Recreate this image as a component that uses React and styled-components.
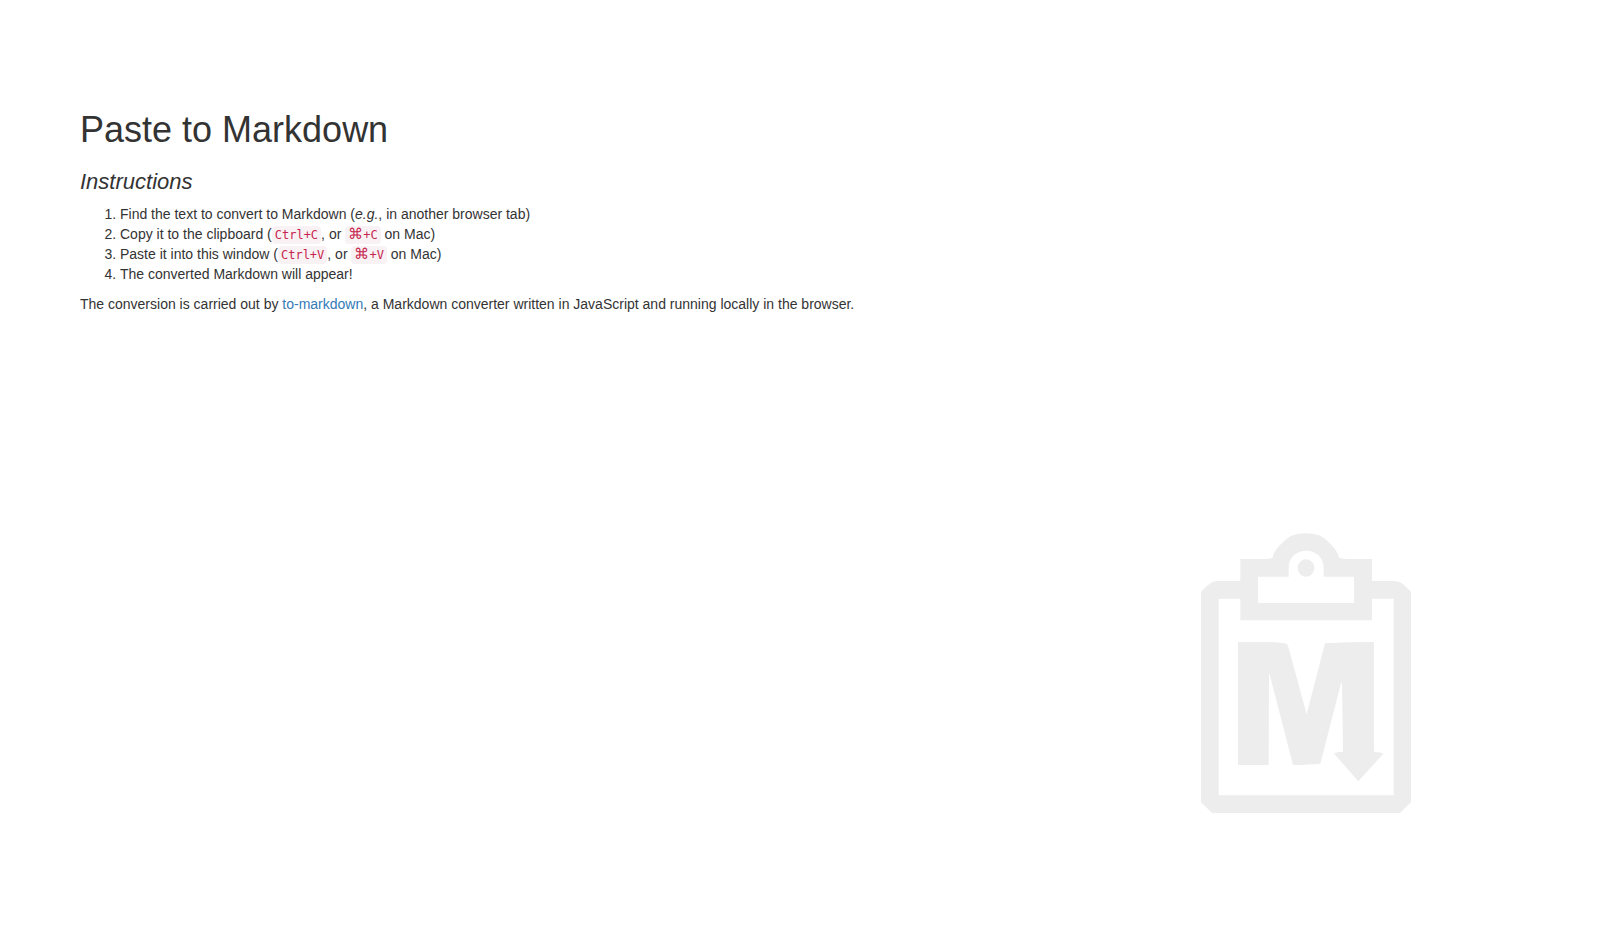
import React from "react";
import styled, { createGlobalStyle } from "styled-components";

const GlobalStyle = createGlobalStyle`
  *, *::before, *::after { box-sizing: border-box; }
  body {
    margin: 0;
    background: #fff;
    color: #333;
    font: 14px/20px "Liberation Sans", Arial, sans-serif;
  }
`;

const Page = styled.main`
  display: flex;
  flex-direction: column;
  min-height: 100vh;
  padding: 110px 80px 135px;
`;

const Title = styled.h1`
  margin: 0 0 20px;
  font-size: 36px;
  font-weight: 500;
  line-height: 40px;
`;

const Subtitle = styled.h2`
  margin: 0 0 10px;
  font-size: 22px;
  font-style: italic;
  font-weight: 500;
  line-height: 24px;
`;

const Steps = styled.ol`
  margin: 0 0 10px;
  padding-left: 40px;
`;

const Text = styled.p`
  margin: 0;
`;

const Code = styled.code`
  padding: 2px 3px;
  border-radius: 4px;
  background: #f9f2f4;
  color: #c7254e;
  font: 12px/16px "DejaVu Sans Mono", monospace;
`;

const Command = styled.span`
  font: 200 15px/12px "DejaVu Sans Light", "DejaVu Sans", sans-serif;
`;

const Link = styled.a`
  color: #337ab7;
  text-decoration: none;

  &:hover { text-decoration: underline; }
`;

const Clipboard = styled.svg`
  align-self: flex-end;
  flex: none;
  width: 210px;
  height: 280px;
  margin: auto 119px 0 0;
  fill: #ededed;
`;

function App() {
  return (
    <>
      <GlobalStyle />
      <Page>
        <Title>Paste to Markdown</Title>
        <Subtitle>Instructions</Subtitle>
        <Steps>
          <li>Find the text to convert to Markdown (<i>e.g.</i>, in another browser tab)</li>
          <li>Copy it to the clipboard (<Code>Ctrl+C</Code>, or <Code><Command>⌘</Command>+C</Code> on Mac)</li>
          <li>Paste it into this window (<Code>Ctrl+V</Code>, or <Code><Command>⌘</Command>+V</Code> on Mac)</li>
          <li>The converted Markdown will appear!</li>
        </Steps>
        <Text>
          The conversion is carried out by <Link href="https://github.com/domchristie/to-markdown">to-markdown</Link>, a Markdown converter written in JavaScript and running locally in the browser.
        </Text>
        <Clipboard viewBox="33 39 630 840" aria-hidden="true">
          <path
            fillRule="evenodd"
            d="M33 215L53 196Q67 183 83 183H151V117H225Q240 116 248 113C250 91 287 55 308 46Q348 33 387 46C408 55 445 91 447 113Q460 117 475 117H546V183H611Q630 183 643 196L663 215V847L630 879H66L33 847ZM86 236V826H611V236H546V301H151V236ZM204 170V249H492V170H401V144C401 75 296 75 296 144V170Z"
          />
          <ellipse cx="348" cy="144" rx="25" ry="26" />
          <path d="M144 366H235Q280 367 291 372Q294 376 297 388L350 583L405 370Q470 366 552 366V695Q578 697 580 701L505 784L432 701Q435 696 459 695L456 490H453L391 731Q360 734 309 735L239 463H237L236 735H144Z" />
        </Clipboard>
      </Page>
    </>
  );
}

export default App;
